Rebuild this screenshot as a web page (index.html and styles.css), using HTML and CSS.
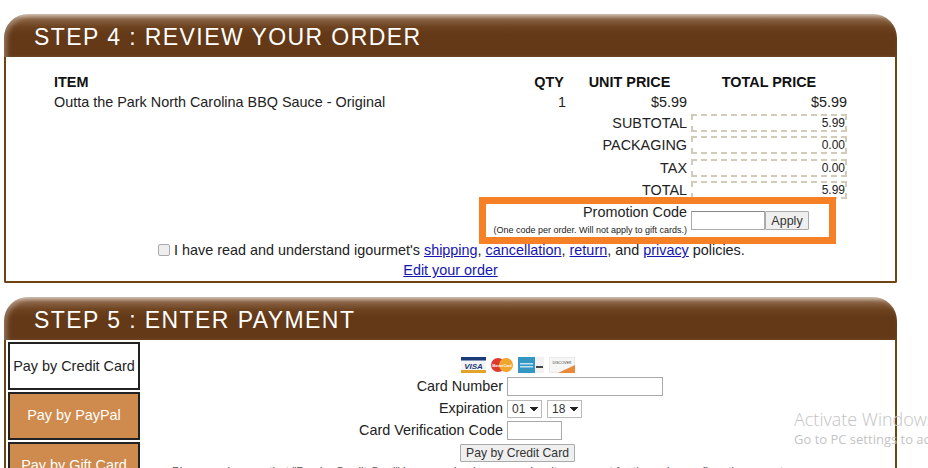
FILE: index.html
```html
<!DOCTYPE html>
<html lang="en">
<head>
    <meta charset="UTF-8">
    <title>Checkout</title>
    <link rel="stylesheet" href="styles.css">
</head>
<body>
    <section class="step">
        <h2 class="step-title">STEP 4 : REVIEW YOUR ORDER</h2>
        <div class="step-body review">
            <div class="order">
                <div class="head">ITEM</div>
                <div class="head head-qty">QTY</div>
                <div class="head head-unit">UNIT PRICE</div>
                <div class="head head-total">TOTAL PRICE</div>

                <div>Outta the Park North Carolina BBQ Sauce - Original</div>
                <div class="num">1</div>
                <div class="num">$5.99</div>
                <div class="num">$5.99</div>
            </div>

            <div class="sums">
                <div class="sum-label">SUBTOTAL</div>
                <div class="sum-box">5.99</div>
                <div class="sum-label">PACKAGING</div>
                <div class="sum-box">0.00</div>
                <div class="sum-label">TAX</div>
                <div class="sum-box">0.00</div>
                <div class="sum-label">TOTAL</div>
                <div class="sum-box">5.99</div>
            </div>

            <div class="promo">
                <div class="promo-label">
                    <div>Promotion Code</div>
                    <div class="promo-note">(One code per order. Will not apply to gift cards.)</div>
                </div>
                <div class="promo-field">
                    <input type="text" class="promo-input">
                    <button class="promo-apply">Apply</button>
                </div>
            </div>
            <div class="highlight"></div>

            <div class="agree">
                <input type="checkbox" class="agree-check">
                I have read and understand igourmet's <a href="#">shipping</a>, <a href="#">cancellation</a>, <a href="#">return</a>, and <a href="#">privacy</a> policies.
            </div>
            <div class="edit"><a href="#">Edit your order</a></div>
        </div>
    </section>

    <section class="step step-payment">
        <h2 class="step-title">STEP 5 : ENTER PAYMENT</h2>
        <div class="step-body payment">
            <div class="tabs">
                <div class="tab tab-active">Pay by Credit Card</div>
                <div class="tab">Pay by PayPal</div>
                <div class="tab">Pay by Gift Card</div>
            </div>
            <div class="card-form">
                <div class="card-logos">
                    <svg width="25" height="16" viewBox="0 0 25 16">
                        <rect width="25" height="16" fill="#f4f4f4"/>
                        <rect width="25" height="3.5" fill="#1a3a78"/>
                        <rect y="13" width="25" height="3" fill="#e3a32b"/>
                        <text x="12.5" y="11.5" class="logo-visa">VISA</text>
                    </svg>
                    <svg width="22" height="16" viewBox="0 0 22 16">
                        <circle cx="7" cy="8" r="7" fill="#dc3a2e"/>
                        <circle cx="15" cy="8" r="7" fill="#f0a52c"/>
                        <text x="11" y="9.5" class="logo-mc">MasterCard</text>
                    </svg>
                    <svg width="26" height="16" viewBox="0 0 26 16">
                        <rect width="26" height="16" fill="#f2f2f2"/>
                        <rect width="17" height="16" fill="#3596c4"/>
                        <rect x="2" y="6" width="13" height="1.5" fill="#bfe2f0"/>
                        <rect x="2" y="9" width="13" height="1.5" fill="#bfe2f0"/>
                        <rect x="18" y="9" width="7" height="2" fill="#444"/>
                    </svg>
                    <svg width="26" height="16" viewBox="0 0 26 16">
                        <rect width="26" height="16" fill="#f6f6f6" stroke="#ddd"/>
                        <path d="M9 16 L26 8 V16 Z" fill="#e98a3a"/>
                        <text x="13" y="7" class="logo-disc">DISCOVER</text>
                    </svg>
                </div>
                <div class="card-row">
                    <label class="card-label">Card Number</label>
                    <input type="text" class="card-input card-number">
                </div>
                <div class="card-row">
                    <label class="card-label">Expiration</label>
                    <div class="card-selects">
                        <select class="card-select"><option>01</option></select>
                        <select class="card-select"><option>18</option></select>
                    </div>
                </div>
                <div class="card-row">
                    <label class="card-label">Card Verification Code</label>
                    <input type="text" class="card-input card-cvv">
                </div>
                <button class="card-submit">Pay by Credit Card</button>
                <p class="card-note">Please make sure that "Pay by Credit Card" is pressed only once and wait a moment for the order confirmation page to appear.</p>
            </div>
        </div>
    </section>

    <div class="watermark">
        <div class="watermark-title">Activate Windows</div>
        <div class="watermark-sub">Go to PC settings to activate Windows.</div>
    </div>
</body>
</html>
```

FILE: styles.css
```css
:root {
    --brown: #643917;
    --brown-line: #6f4413;
    --tan: #cf8a4d;
    --link: #1515b0;
}

* {
    box-sizing: border-box;
}

html, body {
    height: 100%;
    margin: 0;
    overflow: hidden;
}

body {
    background: white;
    color: #222;
    font-family: "Liberation Sans", Arial, sans-serif;
    font-size: 14.4px;
    line-height: 16px;
    padding: 14px 0 0 4px;
    width: 928px;
    position: relative;
}

.step {
    width: 893px;
}

.step-payment {
    margin-top: 14px;
}

.step-title {
    margin: 0;
    height: 43px;
    padding: 10px 0 0 30px;
    color: white;
    font-size: 23px;
    font-weight: normal;
    line-height: 27px;
    letter-spacing: 1.42px;
    border-radius: 24px 24px 0 0;
    background: linear-gradient(#c0ab98 0, #8a6344 5px, #6c421f 13px, var(--brown) 20px);
    box-shadow: inset 3px 2px 5px rgba(255, 255, 255, 0.3);
}

.step-body {
    border: 2px solid var(--brown-line);
    border-top: none;
    position: relative;
}

/* step 4 */
.review {
    height: 226px;
    border-radius: 0 0 2px 2px;
    padding: 17px 0 0 48px;
}

.order {
    display: grid;
    grid-template-columns: 476px 38px 123px 156px;
    width: 793px;
    row-gap: 4px;
}

.head {
    color: #111;
    font-weight: bold;
}

.head-qty {
    text-align: center;
}

.head-unit {
    text-align: center;
}

.head-total {
    text-align: center;
}

.num {
    text-align: right;
}

.order .num:nth-child(6) {
    padding-right: 2px;
}

.order .num:nth-child(7) {
    padding-right: 4px;
}

.sums {
    display: grid;
    grid-template-columns: 633px 156px;
    column-gap: 4px;
    row-gap: 4.4px;
    margin-top: 4px;
    width: 793px;
}

.sum-label {
    text-align: right;
    line-height: 18px;
}

.sum-box {
    height: 18px;
    border: 2px dashed #d2cbb8;
    font-size: 12px;
    line-height: 15px;
    text-align: right;
}

.promo {
    display: grid;
    grid-template-columns: 633px auto;
    column-gap: 4px;
    margin-top: 5px;
    height: 40px;
}

.promo-note {
    font-size: 9px;
    line-height: 12px;
    margin-top: 4px;
}

.promo-label {
    text-align: right;
}

.promo-field {
    display: flex;
    height: 20px;
    margin-top: 7px;
}

.promo-input {
    width: 74px;
    height: 19px;
    padding: 0;
    border: 1px solid #aaa;
    border-top-color: #888;
    background: white;
}

.promo-apply,
.card-submit {
    border: 1px solid #aaa;
    border-radius: 1px;
    background: #efefef;
    font-family: inherit;
    color: #333;
    padding: 0;
}

.promo-apply {
    width: 44px;
    height: 19px;
    font-size: 12.5px;
}

.highlight {
    position: absolute;
    left: 473px;
    top: 140px;
    width: 357px;
    height: 47px;
    border: 7px solid #f58025;
}

.agree {
    margin: -4px 0 0 104px;
    line-height: 20px;
}

.agree-check {
    appearance: none;
    width: 12px;
    height: 12px;
    margin: 0;
    vertical-align: -1px;
    border: 1px solid #aaa;
    border-radius: 2px;
    background: #eee;
}

a {
    color: var(--link);
}

.edit {
    text-align: center;
    margin: 0 0 0 -48px;
    line-height: 20px;
}

/* step 5 */
.payment {
    display: flex;
    height: 200px;
}

.tabs {
    width: 134px;
    flex-shrink: 0;
    padding: 2px 0 0 2px;
}

.tab {
    width: 132px;
    height: 48px;
    margin-bottom: 2px;
    background: var(--tan);
    border: 2px solid #222;
    color: white;
    text-align: center;
    line-height: 43px;
}

.tab-active {
    background: white;
    color: #222;
    line-height: 44px;
}

.card-form {
    flex: 1;
    padding: 17px 0 0 1px;
    text-align: center;
}

.card-logos {
    display: flex;
    justify-content: center;
    gap: 5px;
    height: 16px;
    margin-bottom: 4px;
}

.logo-visa {
    font: italic bold 8px "Liberation Sans", sans-serif;
    fill: #1a3a78;
    text-anchor: middle;
}

.logo-mc {
    font: bold 3.5px "Liberation Sans", sans-serif;
    fill: white;
    text-anchor: middle;
}

.logo-disc {
    font: 3.6px "Liberation Sans", sans-serif;
    fill: #444;
    text-anchor: middle;
}

.card-row {
    display: grid;
    grid-template-columns: 362px auto;
    column-gap: 4px;
    height: 22px;
    text-align: right;
    line-height: 19px;
}

.card-input {
    height: 19px;
    padding: 0;
    border: 1px solid #aaa;
    background: white;
}

.card-number {
    width: 156px;
}

.card-cvv {
    width: 55px;
}

.card-selects {
    display: flex;
    gap: 5px;
    text-align: left;
}

.card-select {
    appearance: none;
    width: 35px;
    height: 18px;
    padding: 0 0 0 4px;
    margin-top: 1px;
    border: 1px solid #bbb;
    background-color: white;
    background-image: linear-gradient(45deg, transparent 50%, #222 50%), linear-gradient(135deg, #222 50%, transparent 50%);
    background-size: 4px 5px;
    background-position: 22px 6px, 26px 6px;
    background-repeat: no-repeat;
    font-family: inherit;
    font-size: 12px;
    color: #333;
}

.card-submit {
    display: block;
    width: 115px;
    height: 18px;
    margin: 1px 0 0 319px;
    font-size: 12.2px;
}

.card-note {
    margin: 2px 0 0 31px;
    font-size: 11.75px;
    line-height: 14px;
    color: #555;
    text-align: left;
    white-space: nowrap;
}

.watermark {
    position: absolute;
    left: 794px;
    top: 409px;
    white-space: nowrap;
    font-family: "Open Sans", sans-serif;
    color: #c4c4c4;
}

.watermark-title {
    font-size: 18px;
    font-weight: 300;
    line-height: 20px;
}

.watermark-sub {
    font-size: 13px;
    line-height: 20px;
}
```
